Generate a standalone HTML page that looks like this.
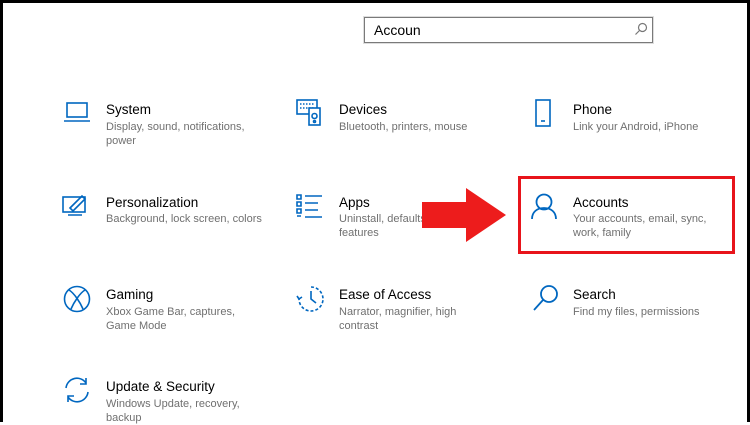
<!DOCTYPE html><html><head><style>
body{margin:0;width:750px;height:422px;overflow:hidden;background:#fff;font-family:"Liberation Sans",sans-serif;position:relative}
.frame{position:absolute;inset:0;border:3px solid #000;border-bottom:none;pointer-events:none}
.t{position:absolute;font-size:13.5px;color:#000}
.d{position:absolute;font-size:11px;color:#707070;line-height:14px;width:160px}
svg{position:absolute;fill:none;stroke:#0067c0;stroke-width:1.6}
</style></head><body>
<div class="frame"></div>
<div style="position:absolute;left:364px;top:17px;width:287px;height:24px;border:1px solid #7a7a7a;box-shadow:0 0 0 1px #ddd"></div>
<div class="t" style="left:374px;top:22px;font-size:14px">Accoun</div>
<svg style="left:634px;top:22px;stroke:#777;stroke-width:1.2" width="14" height="14"><circle cx="8.5" cy="5.5" r="4"/><path d="M5.5 8.5L1.5 12.5"/></svg>

<svg style="left:63px;top:101px" width="28" height="24"><rect x="4" y="2" width="20" height="14"/><path d="M1 20h26"/></svg>
<div class="t" style="left:106px;top:102px">System</div>
<div class="d" style="left:106px;top:120px">Display, sound, notifications, power</div>

<svg style="left:296px;top:99px" width="28" height="28"><rect x="1" y="1" width="20" height="14"/><path d="M4 5h14M4 9h14" stroke-dasharray="1.5 1.5"/><rect x="13" y="9" width="11" height="17" fill="#fff"/><circle cx="18.5" cy="17" r="2.5"/><circle cx="18.5" cy="22.5" r="1"/></svg>
<div class="t" style="left:339px;top:102px">Devices</div>
<div class="d" style="left:339px;top:120px">Bluetooth, printers, mouse</div>

<svg style="left:534px;top:99px" width="18" height="30"><rect x="2" y="1" width="14" height="26"/><path d="M7 22h4"/></svg>
<div class="t" style="left:573px;top:102px">Phone</div>
<div class="d" style="left:573px;top:120px">Link your Android, iPhone</div>

<svg style="left:62px;top:193px" width="30" height="26"><rect x="1" y="4" width="22" height="15"/><path d="M6 22h14M8 15l12-12 3 3-12 12z"/></svg>
<div class="t" style="left:106px;top:195px">Personalization</div>
<div class="d" style="left:106px;top:212px">Background, lock screen, colors</div>

<svg style="left:296px;top:193px" width="30" height="26"><path d="M1 2h4v4h-4zM1 9h4v4h-4zM1 16h4v4h-4zM1 23h4v0M9 3h17M9 10h13M9 17h13M9 24h17"/></svg>
<div class="t" style="left:339px;top:195px">Apps</div>
<div class="d" style="left:339px;top:212px;width:85px;overflow:hidden;white-space:nowrap">Uninstall, defaults,<br>features</div>

<svg style="left:530px;top:192px;stroke-width:1.8" width="28" height="28"><circle cx="14" cy="10" r="7.5"/><path d="M2 27c0-7 5-11 12-11s12 4 12 11"/></svg>
<div class="t" style="left:573px;top:195px">Accounts</div>
<div class="d" style="left:573px;top:212px;width:150px">Your accounts, email, sync, work, family</div>

<svg style="left:63px;top:285px" width="28" height="28"><circle cx="14" cy="14" r="12.5"/><path d="M6 5c5 3 11 12 14 19M22 5c-5 3-11 12-14 19"/></svg>
<div class="t" style="left:106px;top:287px">Gaming</div>
<div class="d" style="left:106px;top:305px;width:155px">Xbox Game Bar, captures, Game Mode</div>

<svg style="left:296px;top:285px" width="30" height="28"><path d="M15 2a12 12 0 1 1-12 12" stroke-dasharray="3 2"/><path d="M15 6v8l5 4M15 2v0"/><path d="M3 14l-2-3M3 14l3-2"/></svg>
<div class="t" style="left:339px;top:287px">Ease of Access</div>
<div class="d" style="left:339px;top:305px;width:130px">Narrator, magnifier, high contrast</div>

<svg style="left:532px;top:284px;stroke-width:1.8" width="28" height="28"><circle cx="17" cy="10" r="8"/><path d="M11 16L2 26"/></svg>
<div class="t" style="left:573px;top:287px">Search</div>
<div class="d" style="left:573px;top:305px">Find my files, permissions</div>

<svg style="left:63px;top:376px" width="28" height="28"><path d="M3 12a11 11 0 0 1 20-5M25 16a11 11 0 0 1-20 5M23 2v6h-6M5 26v-6h6"/></svg>
<div class="t" style="left:106px;top:379px">Update &amp; Security</div>
<div class="d" style="left:106px;top:397px">Windows Update, recovery, backup</div>

<svg style="left:420px;top:186px;stroke:none;fill:#ed1c1c" width="90" height="58"><path d="M2 16h44V2l40 27-40 27V42H2z"/></svg>
<div style="position:absolute;left:518px;top:176px;width:211px;height:72px;border:3px solid #e8141b"></div>
</body></html>
